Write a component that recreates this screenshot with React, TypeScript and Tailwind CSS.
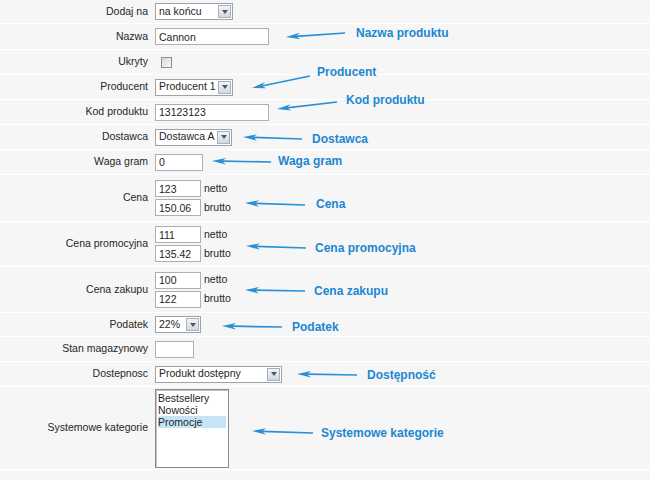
import React from 'react';

type Annotation = {
  text: string;
  x: number;
  y: number;
  tail: [number, number];
  tip: [number, number];
};

const annotations: Annotation[] = [
  { text: 'Nazwa produktu', x: 356, y: 33, tail: [345, 33], tip: [286, 37] },
  { text: 'Producent', x: 317, y: 72, tail: [310, 76], tip: [252, 88] },
  { text: 'Kod produktu', x: 346, y: 100, tail: [337, 102], tip: [277, 109] },
  { text: 'Dostawca', x: 312, y: 139, tail: [302, 139], tip: [243, 137] },
  { text: 'Waga gram', x: 278, y: 161, tail: [271, 162], tip: [212, 161] },
  { text: 'Cena', x: 316, y: 204, tail: [305, 205], tip: [245, 203] },
  { text: 'Cena promocyjna', x: 315, y: 248, tail: [306, 248], tip: [246, 246] },
  { text: 'Cena zakupu', x: 314, y: 291, tail: [305, 291], tip: [245, 290] },
  { text: 'Podatek', x: 292, y: 327, tail: [282, 327], tip: [222, 326] },
  { text: 'Dostępność', x: 367, y: 375, tail: [357, 375], tip: [297, 374] },
  { text: 'Systemowe kategorie', x: 321, y: 433, tail: [313, 433], tip: [252, 431] },
];

function Arrow({ tail, tip }: { tail: [number, number]; tip: [number, number] }) {
  const dx = tip[0] - tail[0];
  const dy = tip[1] - tail[1];
  const len = Math.hypot(dx, dy);
  const ux = dx / len;
  const uy = dy / len;
  const nx = -uy;
  const ny = ux;
  const bx = tip[0] - ux * 14;
  const by = tip[1] - uy * 14;
  const mx = tip[0] - ux * 10;
  const my = tip[1] - uy * 10;
  const pts = [
    [tip[0], tip[1]],
    [bx + nx * 3.2, by + ny * 3.2],
    [mx, my],
    [bx - nx * 3.2, by - ny * 3.2],
  ]
    .map((p) => p.join(','))
    .join(' ');
  return (
    <g>
      <line x1={tail[0]} y1={tail[1]} x2={mx} y2={my} stroke="#2a8fd6" strokeWidth={1.7} />
      <polygon points={pts} fill="#2a8fd6" />
    </g>
  );
}

function Row({ label, h, children }: { label: string; h: string; children: React.ReactNode }) {
  return (
    <div className={`flex items-center border-b border-white ${h}`}>
      <div className="w-[148px] text-right">{label}</div>
      <div className="ml-[7px]">{children}</div>
    </div>
  );
}

function TextInput({ value, w }: { value: string; w: string }) {
  return (
    <input
      readOnly
      value={value}
      className={`block h-[17px] border border-[#a9b0b8] bg-white pl-[3px] text-[#1e1e1e] outline-none ${w}`}
    />
  );
}

function Select({ value, w }: { value: string; w: string }) {
  return (
    <div className={`flex h-[17px] items-center border border-[#9ba4ae] bg-white ${w}`}>
      <span className="flex-1 truncate pl-[3px] text-[#1e1e1e]">{value}</span>
      <span className="mr-[1px] flex h-[13px] w-[13px] items-center justify-center border border-[#a7b1bd] bg-gradient-to-b from-[#f3f4f6] to-[#d3d8dd]">
        <span className="h-0 w-0 border-x-[3px] border-t-[4px] border-x-transparent border-t-[#4f5761]" />
      </span>
    </div>
  );
}

function PricePair({ netto, brutto }: { netto: string; brutto: string }) {
  return (
    <div className="flex flex-col gap-[2px]">
      <div className="flex items-center gap-[3px]">
        <TextInput value={netto} w="w-[46px]" />
        <span>netto</span>
      </div>
      <div className="flex items-center gap-[3px]">
        <TextInput value={brutto} w="w-[46px]" />
        <span>brutto</span>
      </div>
    </div>
  );
}

export default function App() {
  return (
    <div className="relative h-[480px] w-[650px] overflow-hidden bg-[#f6f6f6] font-[family-name:Tahoma,Liberation_Sans,sans-serif] text-[10.5px] text-[#262626]">
      <Row label="Dodaj na" h="h-[24px]">
        <Select value="na końcu" w="w-[78px]" />
      </Row>
      <Row label="Nazwa" h="h-[26px]">
        <TextInput value="Cannon" w="w-[114px]" />
      </Row>
      <Row label="Ukryty" h="h-[25px]">
        <div className="ml-[6px] h-[11px] w-[11px] border border-[#8e8e8e] bg-gradient-to-br from-[#d8d8d8] to-[#fafafa]" />
      </Row>
      <Row label="Producent" h="h-[25px]">
        <Select value="Producent 1" w="w-[78px]" />
      </Row>
      <Row label="Kod produktu" h="h-[25px]">
        <TextInput value="13123123" w="w-[114px]" />
      </Row>
      <Row label="Dostawca" h="h-[25px]">
        <Select value="Dostawca A" w="w-[77px]" />
      </Row>
      <Row label="Waga gram" h="h-[25px]">
        <TextInput value="0" w="w-[48px]" />
      </Row>
      <Row label="Cena" h="h-[47px]">
        <PricePair netto="123" brutto="150.06" />
      </Row>
      <Row label="Cena promocyjna" h="h-[45px]">
        <PricePair netto="111" brutto="135.42" />
      </Row>
      <Row label="Cena zakupu" h="h-[46px]">
        <PricePair netto="100" brutto="122" />
      </Row>
      <Row label="Podatek" h="h-[24px]">
        <Select value="22%" w="w-[46px]" />
      </Row>
      <Row label="Stan magazynowy" h="h-[25px]">
        <TextInput value="" w="w-[39px]" />
      </Row>
      <Row label="Dostepnosc" h="h-[25px]">
        <Select value="Produkt dostępny" w="w-[127px]" />
      </Row>
      <Row label="Systemowe kategorie" h="h-[83px]">
        <div className="h-[79px] w-[74px] border border-[#8a8a8a] bg-white p-[2px] text-[#1e1e1e] shadow-[inset_1px_1px_0_#c4c4c4]">
          <div className="leading-[12px]">Bestsellery</div>
          <div className="leading-[12px]">Nowości</div>
          <div className="bg-[#c7e4f5] leading-[12px]">Promocje</div>
        </div>
      </Row>

      <svg className="pointer-events-none absolute inset-0" width={650} height={480}>
        {annotations.map((a) => (
          <Arrow key={a.text} tail={a.tail} tip={a.tip} />
        ))}
      </svg>
      {annotations.map((a) => (
        <div
          key={a.text}
          className="absolute text-[12px] font-bold leading-[14px] whitespace-nowrap text-[#1b87d2]"
          style={{ left: a.x, top: a.y - 7 }}
        >
          {a.text}
        </div>
      ))}
    </div>
  );
}
